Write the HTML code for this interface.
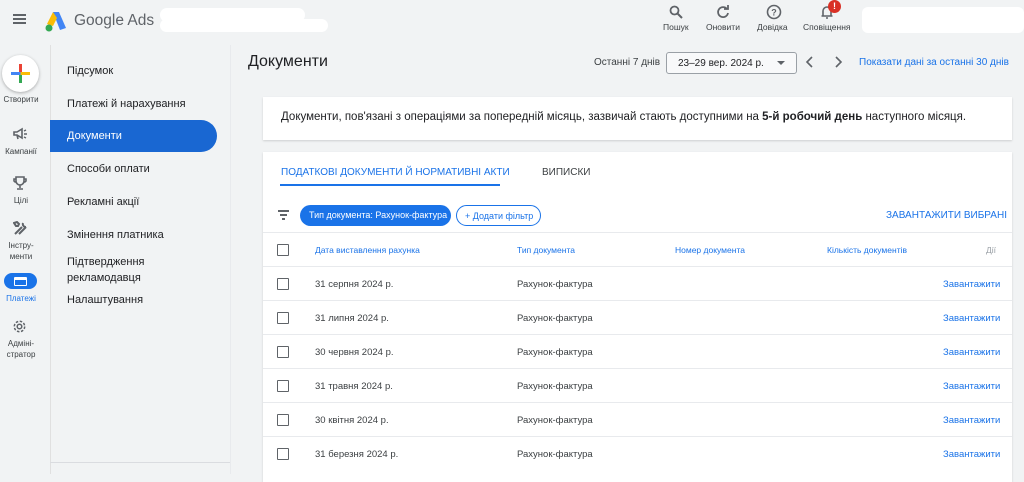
<!DOCTYPE html>
<html><head><meta charset="utf-8"><style>
*{box-sizing:border-box;margin:0;padding:0}
body{width:1024px;height:474px;overflow:hidden;background:#f1f3f4;font-family:"Liberation Sans",Arial,sans-serif;color:#3c4043;position:relative}
.a{position:absolute}
.blue{color:#1a73e8}
.nav div{position:absolute;left:67px;font-size:11px;color:#202124}
.row{position:absolute;left:263px;width:749px;height:34px;border-top:1px solid #e8eaed;font-size:9.5px;color:#3c4043}
.cb{position:absolute;left:14px;top:11px;width:12px;height:12px;border:1.5px solid #5f6368;border-radius:1px}
.row span{position:absolute;top:12px}
</style></head><body>
<div class="a" style="left:13px;top:14px;width:13px;height:2px;background:#5f6368;box-shadow:0 4px 0 #5f6368,0 8px 0 #5f6368"></div>
<svg class="a" style="left:44px;top:10px" width="24" height="22" viewBox="0 0 24 22"><path d="M9 2 L15 2 L22 18 L16 20 Z" fill="#4285f4"/><path d="M9 2 L3 14 L9 16 L13 8Z" fill="#fbbc04"/><circle cx="5" cy="18" r="3.5" fill="#34a853"/></svg>
<div class="a" style="left:74px;top:12px;font-size:15.5px;color:#5f6368">Google Ads</div>
<div class="a" style="left:160px;top:8px;width:145px;height:14px;background:#fff;border-radius:7px"></div>
<div class="a" style="left:160px;top:19px;width:168px;height:13px;background:#fff;border-radius:7px"></div>
<div class="a" style="left:862px;top:7px;width:162px;height:26px;background:#fff;border-radius:6px"></div>
<svg class="a" style="left:669px;top:5px" width="14" height="14" viewBox="0 0 14 14"><circle cx="5.5" cy="5.5" r="4" stroke="#5f6368" stroke-width="1.8" fill="none"/><path d="M8.5 8.5 L13 13" stroke="#5f6368" stroke-width="2"/></svg>
<svg class="a" style="left:716px;top:5px" width="14" height="14" viewBox="0 0 14 14"><path d="M11 4 A5 5 0 1 0 12 8" stroke="#5f6368" stroke-width="1.8" fill="none"/><path d="M8 4 H12 V0" stroke="#5f6368" stroke-width="1.8" fill="none"/></svg>
<svg class="a" style="left:766px;top:4px" width="16" height="16" viewBox="0 0 16 16"><circle cx="8" cy="8" r="6.5" stroke="#5f6368" stroke-width="1.6" fill="none"/><text x="8" y="11.5" font-size="9" text-anchor="middle" fill="#5f6368" font-family="Liberation Sans" font-weight="bold">?</text></svg>
<svg class="a" style="left:820px;top:5px" width="14" height="14" viewBox="0 0 14 14"><path d="M3 11 V6 A4 4 0 0 1 11 6 V11 Z M1.5 11 H12.5 M6 13 H8" stroke="#5f6368" stroke-width="1.6" fill="none"/></svg>
<div class="a" style="left:828px;top:0px;width:13px;height:13px;border-radius:50%;background:#d93025;color:#fff;font-size:9px;font-weight:bold;text-align:center;line-height:13px">!</div>
<div class="a" style="left:663px;top:22px;font-size:8.5px;color:#3c4043">Пошук</div>
<div class="a" style="left:706px;top:22px;font-size:8.5px;color:#3c4043">Оновити</div>
<div class="a" style="left:757px;top:22px;font-size:8.5px;color:#3c4043">Довідка</div>
<div class="a" style="left:803px;top:22px;font-size:8.5px;color:#3c4043">Сповіщення</div>
<div class="a" style="left:50px;top:45px;width:1px;height:429px;background:#e0e0e0"></div>
<div class="a" style="left:2px;top:55px;width:37px;height:37px;border-radius:50%;background:#fff;box-shadow:0 1px 3px rgba(0,0,0,.3)"></div>
<div class="a" style="left:19px;top:64px;width:3px;height:19px;background:linear-gradient(#ea4335 50%,#34a853 50%)"></div>
<div class="a" style="left:11px;top:72px;width:19px;height:3px;background:linear-gradient(90deg,#4285f4 50%,#fbbc04 50%)"></div>
<div class="a" style="left:0;top:95px;width:42px;text-align:center;font-size:8px;color:#3c4043">Створити</div>
<svg class="a" style="left:13px;top:127px" width="16" height="14" viewBox="0 0 16 14"><path d="M1 5 H4 L9 2 V11 L4 8 H1 Z M4 8 L5 12" stroke="#5f6368" stroke-width="1.6" fill="none"/><path d="M11 4 L13 3 M11 7 H14 M11 10 L13 11" stroke="#5f6368" stroke-width="1.4"/></svg>
<div class="a" style="left:0;top:147px;width:42px;text-align:center;font-size:8px">Кампанії</div>
<svg class="a" style="left:13px;top:176px" width="14" height="14" viewBox="0 0 14 14"><path d="M3 1 H11 V5 A4 4 0 0 1 3 5 Z M3 3 H1 V5 A2 2 0 0 0 3 6 M11 3 H13 V5 A2 2 0 0 1 11 6 M7 9 V12 M4 13 H10" stroke="#5f6368" stroke-width="1.6" fill="none"/></svg>
<div class="a" style="left:0;top:196px;width:42px;text-align:center;font-size:8px">Цілі</div>
<svg class="a" style="left:13px;top:221px" width="15" height="15" viewBox="0 0 15 15"><path d="M2 13 L9 6 M6 13 L13 6 M10 2 A3 3 0 0 0 13 6 M1 2 L4 1 L6 3 L5 5 L3 5 Z" stroke="#5f6368" stroke-width="2" fill="none"/></svg>
<div class="a" style="left:0;top:240px;width:42px;text-align:center;font-size:8px;line-height:11px">Інстру-<br>менти</div>
<div class="a" style="left:4px;top:273px;width:33px;height:16px;border-radius:8px;background:#1a73e8"></div>
<div class="a" style="left:14px;top:277px;width:13px;height:9px;border:1.5px solid #fff;border-radius:1px;border-top-width:3px"></div>
<div class="a" style="left:0;top:294px;width:42px;text-align:center;font-size:8px;color:#1a73e8">Платежі</div>
<svg class="a" style="left:12px;top:319px" width="15" height="15" viewBox="0 0 15 15"><circle cx="7.5" cy="7.5" r="2.3" stroke="#5f6368" stroke-width="1.5" fill="none"/><circle cx="7.5" cy="7.5" r="5.2" stroke="#5f6368" stroke-width="1.5" fill="none" stroke-dasharray="2.5 1.6"/></svg>
<div class="a" style="left:0;top:338px;width:42px;text-align:center;font-size:8px;line-height:11px">Адміні-<br>стратор</div>
<div class="a" style="left:230px;top:45px;width:1px;height:429px;background:#e8eaed"></div>
<div class="a" style="left:50px;top:462px;width:180px;height:1px;background:#dadce0"></div>
<div class="a" style="left:50px;top:120px;width:167px;height:32px;background:#1967d2;border-radius:0 16px 16px 0"></div>
<div class="nav">
<div style="top:65px">Підсумок</div>
<div style="top:98px">Платежі й нарахування</div>
<div style="top:130px;color:#fff">Документи</div>
<div style="top:163px">Способи оплати</div>
<div style="top:196px">Рекламні акції</div>
<div style="top:229px">Змінення платника</div>
<div style="top:254px;line-height:16px">Підтвердження<br>рекламодавця</div>
<div style="top:294px">Налаштування</div>
</div>
<div class="a" style="left:248px;top:53px;font-size:16px;color:#202124">Документи</div>
<div class="a" style="left:594px;top:57px;font-size:10px;color:#3c4043">Останні 7 днів</div>
<div class="a" style="left:666px;top:52px;width:131px;height:22px;border:1px solid #9aa0a6;border-radius:3px;background:#f8f9fa;font-size:10px;color:#202124;padding:5px 0 0 11px">23–29 вер. 2024 р.</div>
<div class="a" style="left:777px;top:61px;border:4px solid transparent;border-top:4px solid #5f6368"></div>
<svg class="a" style="left:805px;top:56px" width="10" height="12" viewBox="0 0 10 12"><path d="M7 1 L2 6 L7 11" stroke="#5f6368" stroke-width="1.6" fill="none"/></svg>
<svg class="a" style="left:833px;top:56px" width="10" height="12" viewBox="0 0 10 12"><path d="M3 1 L8 6 L3 11" stroke="#5f6368" stroke-width="1.6" fill="none"/></svg>
<div class="a blue" style="left:859px;top:57px;font-size:10px">Показати дані за останні 30 днів</div>
<div class="a" style="left:263px;top:97px;width:749px;height:43px;background:#fff;box-shadow:0 1px 2px rgba(0,0,0,.15);font-size:11.5px;color:#202124;padding:14px 0 0 18px;white-space:nowrap">Документи, пов'язані з операціями за попередній місяць, зазвичай стають доступними на <b>5-й робочий день</b> наступного місяця.</div>
<div class="a" style="left:263px;top:152px;width:749px;height:330px;background:#fff;box-shadow:0 1px 2px rgba(0,0,0,.15)"></div>
<div class="a blue" style="left:281px;top:167px;font-size:10px">ПОДАТКОВІ ДОКУМЕНТИ Й НОРМАТИВНІ АКТИ</div>
<div class="a" style="left:280px;top:184px;width:220px;height:2px;background:#1a73e8"></div>
<div class="a" style="left:542px;top:167px;font-size:10px;color:#3c4043">ВИПИСКИ</div>
<div class="a" style="left:278px;top:210px;width:11px;height:1.5px;background:#5f6368"></div>
<div class="a" style="left:280px;top:214px;width:7px;height:1.5px;background:#5f6368"></div>
<div class="a" style="left:282px;top:218px;width:3px;height:1.5px;background:#5f6368"></div>
<div class="a" style="left:300px;top:205px;width:151px;height:21px;border-radius:11px;background:#1a73e8;color:#fff;font-size:9px;padding:5px 0 0 9px">Тип документа: Рахунок-фактура</div>
<div class="a" style="left:456px;top:205px;width:85px;height:21px;border-radius:11px;border:1px solid #1a73e8;color:#1a73e8;font-size:9px;padding:5px 0 0 8px">+ Додати фільтр</div>
<div class="a blue" style="left:886px;top:210px;font-size:10px">ЗАВАНТАЖИТИ ВИБРАНІ</div>
<div class="row" style="top:232px"><div class="cb"></div><span class="blue" style="left:52px;font-size:8.5px">Дата виставлення рахунка</span><span class="blue" style="left:254px;font-size:8.5px">Тип документа</span><span class="blue" style="left:412px;font-size:8.5px">Номер документа</span><span class="blue" style="left:564px;font-size:8.5px">Кількість документів</span><span style="left:723px;font-size:8.5px;color:#9aa0a6">Дії</span></div>
<div class="row" style="top:266px"><div class="cb"></div><span style="left:52px">31 серпня 2024 р.</span><span style="left:254px">Рахунок-фактура</span><span class="blue" style="left:680px">Завантажити</span></div>
<div class="row" style="top:300px"><div class="cb"></div><span style="left:52px">31 липня 2024 р.</span><span style="left:254px">Рахунок-фактура</span><span class="blue" style="left:680px">Завантажити</span></div>
<div class="row" style="top:334px"><div class="cb"></div><span style="left:52px">30 червня 2024 р.</span><span style="left:254px">Рахунок-фактура</span><span class="blue" style="left:680px">Завантажити</span></div>
<div class="row" style="top:368px"><div class="cb"></div><span style="left:52px">31 травня 2024 р.</span><span style="left:254px">Рахунок-фактура</span><span class="blue" style="left:680px">Завантажити</span></div>
<div class="row" style="top:402px"><div class="cb"></div><span style="left:52px">30 квітня 2024 р.</span><span style="left:254px">Рахунок-фактура</span><span class="blue" style="left:680px">Завантажити</span></div>
<div class="row" style="top:436px"><div class="cb"></div><span style="left:52px">31 березня 2024 р.</span><span style="left:254px">Рахунок-фактура</span><span class="blue" style="left:680px">Завантажити</span></div>
</body></html>
